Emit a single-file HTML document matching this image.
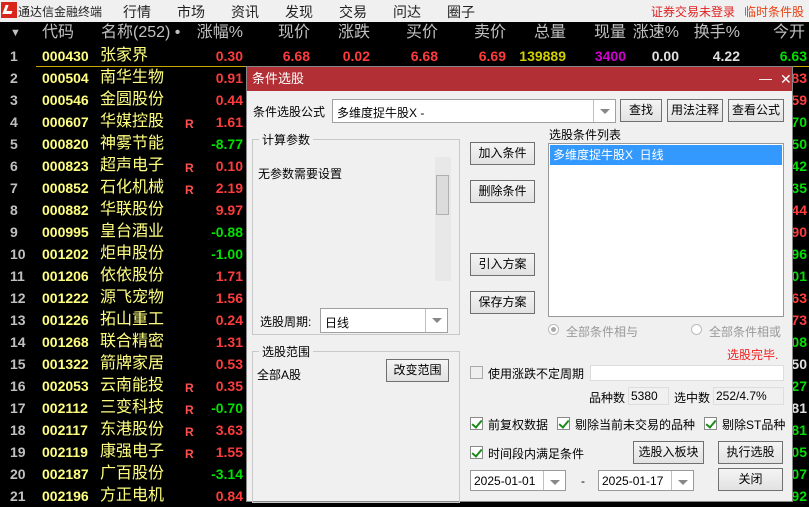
<!DOCTYPE html>
<html><head><meta charset="utf-8"><style>
*{margin:0;padding:0;box-sizing:border-box}
body{width:809px;height:507px;overflow:hidden;background:#000;position:relative;font-family:"Liberation Sans","Noto Sans CJK SC",sans-serif;}
.a{position:absolute;white-space:nowrap}
#menu{position:absolute;left:0;top:0;width:809px;height:22px;background:#f0f0f0;font-size:14px;color:#222}
#menu .a{top:2px}
.hd{position:absolute;top:22px;height:22px;line-height:22px;font-size:16px;color:#c0c0c0}
.r{position:absolute;left:0;width:809px;height:22px;line-height:22px;font-weight:bold}
.r .n{position:absolute;left:10px;color:#c0c0c0;font-size:14px;font-weight:bold}
.r .c{position:absolute;left:42px;color:#ffff80;font-size:14px}
.r .m{position:absolute;left:100px;color:#ffff80;font-size:16px;font-weight:normal}
.r .R{position:absolute;left:185px;color:#ff5050;font-size:12px;top:2px}
.r .v{position:absolute;right:566px;font-size:14px}
.r .o{position:absolute;right:2px;font-size:14px}
.red{color:#ff3c3c}.grn{color:#00e000}.wht{color:#e0e0e0}
#dlg{position:absolute;left:246px;top:66px;width:547px;height:436px;background:#f0f0f0;border:1px solid #888;font-size:12px;color:#000}
#tb{position:absolute;left:0;top:0;width:545px;height:24px;background:#b22f35;color:#fff;font-size:13px;line-height:24px;padding-left:5px}
.btn{position:absolute;border:1px solid #707070;background:linear-gradient(#f4f4f4,#e2e2e2);text-align:center;font-size:12px;height:23px;line-height:21px}
.box{position:absolute;background:#fff;border:1px solid #a0a0a0}
.grp{position:absolute;border:1px solid #c8c8c8}
.gl{position:absolute;background:#f0f0f0;padding:0 3px;font-size:12px;top:-9px;left:6px}
.cb{position:absolute;width:13px;height:13px;border:1px solid #8a8a8a;background:#fff}
.cb.k::after{content:"";position:absolute;left:3px;top:0px;width:4px;height:8px;border:solid #1a8a1a;border-width:0 2px 2px 0;transform:rotate(40deg)}
.t{position:absolute;font-size:12px;white-space:nowrap}
.dd{position:absolute;top:0;right:0;width:22px;height:100%;border-left:1px solid #c0c0c0}
.dd::after{content:"";position:absolute;left:6px;top:9px;border:5px solid transparent;border-top:5px solid #888;border-bottom:0}
</style></head><body>
<div id="menu">
<div class="a" style="left:1px;top:2px;width:16px;height:16px;background:#d9261c"></div>
<div class="a" style="left:4px;top:5px;width:9px;height:9px;border-left:3px solid #fff;border-bottom:3px solid #fff;transform:skewX(-20deg)"></div>
<div class="a" style="left:18px;top:3px;font-size:12px">通达信金融终端</div>
<div class="a" style="left:123px">行情</div><div class="a" style="left:177px">市场</div><div class="a" style="left:231px">资讯</div><div class="a" style="left:285px">发现</div><div class="a" style="left:339px">交易</div><div class="a" style="left:393px">问达</div><div class="a" style="left:447px">圈子</div>
<div class="a" style="left:651px;top:3px;font-size:12px;color:#e02020">证券交易未登录</div><div class="a" style="left:744px;top:3px;font-size:12px;color:#e84010">临时条件股</div>
</div>
<div class="hd" style="left:10px;font-size:11px">▼</div>
<div class="hd" style="left:42px">代码</div>
<div class="hd" style="left:101px">名称(252) •</div>
<div class="hd" style="right:566px">涨幅%</div>
<div class="hd" style="right:499px">现价</div>
<div class="hd" style="right:439px">涨跌</div>
<div class="hd" style="right:371px">买价</div>
<div class="hd" style="right:303px">卖价</div>
<div class="hd" style="right:243px">总量</div>
<div class="hd" style="right:183px">现量</div>
<div class="hd" style="right:130px">涨速%</div>
<div class="hd" style="right:69px">换手%</div>
<div class="hd" style="right:4px">今开</div>
<div class="r" style="top:45px"><span class="n">1</span><span class="c">000430</span><span class="m">张家界</span><span class="v red">0.30</span>
<span class="a red" style="right:499px;font-size:14px">6.68</span><span class="a red" style="right:439px;font-size:14px">0.02</span><span class="a red" style="right:371px;font-size:14px">6.68</span><span class="a red" style="right:303px;font-size:14px">6.69</span><span class="a" style="right:243px;font-size:14px;color:#d0d000">139889</span><span class="a" style="right:183px;font-size:14px;color:#d000d0">3400</span><span class="a wht" style="right:130px;font-size:14px">0.00</span><span class="a wht" style="right:69px;font-size:14px">4.22</span><span class="o grn">6.63</span></div>
<div class="a" style="left:36px;top:66px;width:773px;height:1px;background:#c8a800"></div>
<div class="r" style="top:67px"><span class="n">2</span><span class="c">000504</span><span class="m">南华生物</span><span class="v red">0.91</span><span class="o red">83</span></div>
<div class="r" style="top:89px"><span class="n">3</span><span class="c">000546</span><span class="m">金圆股份</span><span class="v red">0.44</span><span class="o red">59</span></div>
<div class="r" style="top:111px"><span class="n">4</span><span class="c">000607</span><span class="m">华媒控股</span><span class="R">R</span><span class="v red">1.61</span><span class="o grn">70</span></div>
<div class="r" style="top:133px"><span class="n">5</span><span class="c">000820</span><span class="m">神雾节能</span><span class="v grn">-8.77</span><span class="o grn">50</span></div>
<div class="r" style="top:155px"><span class="n">6</span><span class="c">000823</span><span class="m">超声电子</span><span class="R">R</span><span class="v red">0.10</span><span class="o grn">42</span></div>
<div class="r" style="top:177px"><span class="n">7</span><span class="c">000852</span><span class="m">石化机械</span><span class="R">R</span><span class="v red">2.19</span><span class="o grn">35</span></div>
<div class="r" style="top:199px"><span class="n">8</span><span class="c">000882</span><span class="m">华联股份</span><span class="v red">9.97</span><span class="o red">44</span></div>
<div class="r" style="top:221px"><span class="n">9</span><span class="c">000995</span><span class="m">皇台酒业</span><span class="v grn">-0.88</span><span class="o red">90</span></div>
<div class="r" style="top:243px"><span class="n">10</span><span class="c">001202</span><span class="m">炬申股份</span><span class="v grn">-1.00</span><span class="o grn">96</span></div>
<div class="r" style="top:265px"><span class="n">11</span><span class="c">001206</span><span class="m">依依股份</span><span class="v red">1.71</span><span class="o grn">01</span></div>
<div class="r" style="top:287px"><span class="n">12</span><span class="c">001222</span><span class="m">源飞宠物</span><span class="v red">1.56</span><span class="o red">63</span></div>
<div class="r" style="top:309px"><span class="n">13</span><span class="c">001226</span><span class="m">拓山重工</span><span class="v red">0.24</span><span class="o red">73</span></div>
<div class="r" style="top:331px"><span class="n">14</span><span class="c">001268</span><span class="m">联合精密</span><span class="v red">1.31</span><span class="o grn">08</span></div>
<div class="r" style="top:353px"><span class="n">15</span><span class="c">001322</span><span class="m">箭牌家居</span><span class="v red">0.53</span><span class="o wht">50</span></div>
<div class="r" style="top:375px"><span class="n">16</span><span class="c">002053</span><span class="m">云南能投</span><span class="R">R</span><span class="v red">0.35</span><span class="o grn">27</span></div>
<div class="r" style="top:397px"><span class="n">17</span><span class="c">002112</span><span class="m">三变科技</span><span class="R">R</span><span class="v grn">-0.70</span><span class="o wht">81</span></div>
<div class="r" style="top:419px"><span class="n">18</span><span class="c">002117</span><span class="m">东港股份</span><span class="R">R</span><span class="v red">3.63</span><span class="o grn">81</span></div>
<div class="r" style="top:441px"><span class="n">19</span><span class="c">002119</span><span class="m">康强电子</span><span class="R">R</span><span class="v red">1.55</span><span class="o grn">05</span></div>
<div class="r" style="top:463px"><span class="n">20</span><span class="c">002187</span><span class="m">广百股份</span><span class="v grn">-3.14</span><span class="o grn">07</span></div>
<div class="r" style="top:485px"><span class="n">21</span><span class="c">002196</span><span class="m">方正电机</span><span class="v red">0.84</span><span class="o grn">92</span></div>

<div id="dlg">
<div id="tb">条件选股<span class="a" style="left:512px;top:0">—</span><span class="a" style="left:533px;top:0;font-size:14px">✕</span></div>
<div class="t" style="left:6px;top:36px">条件选股公式</div>
<div class="box" style="left:85px;top:32px;width:284px;height:24px"><span class="t" style="left:4px;top:4px">多维度捉牛股X -</span><div class="dd"></div></div>
<div class="btn" style="left:373px;top:32px;width:42px">查找</div>
<div class="btn" style="left:420px;top:32px;width:56px">用法注释</div>
<div class="btn" style="left:481px;top:32px;width:56px">查看公式</div>
<div class="grp" style="left:5px;top:72px;width:208px;height:196px"><span class="gl">计算参数</span>
<span class="t" style="left:5px;top:25px">无参数需要设置</span>
<div class="a" style="left:182px;top:17px;width:16px;height:124px;background:#e8e8e8"><div class="a" style="left:1px;top:18px;width:13px;height:40px;background:#dcdcdc;border:1px solid #b0b0b0"></div></div>
<span class="t" style="left:7px;top:173px">选股周期:</span>
<div class="box" style="left:67px;top:168px;width:128px;height:25px"><span class="t" style="left:4px;top:5px">日线</span><div class="dd"></div></div>
</div>
<div class="grp" style="left:5px;top:284px;width:208px;height:152px"><span class="gl">选股范围</span>
<span class="t" style="left:4px;top:14px">全部A股</span>
<div class="btn" style="left:133px;top:7px;width:63px">改变范围</div></div>
<div class="btn" style="left:223px;top:75px;width:65px">加入条件</div>
<div class="btn" style="left:223px;top:113px;width:65px">删除条件</div>
<div class="btn" style="left:223px;top:186px;width:65px">引入方案</div>
<div class="btn" style="left:223px;top:224px;width:65px">保存方案</div>
<span class="t" style="left:302px;top:59px">选股条件列表</span>
<div class="box" style="left:301px;top:76px;width:236px;height:174px;border-color:#999"><div class="a" style="left:1px;top:1px;width:232px;height:20px;background:#3399ff;color:#fff;font-size:12px;line-height:20px;padding-left:3px">多维度捉牛股X&nbsp; 日线</div></div>
<div class="a" style="left:301px;top:257px;width:11px;height:11px;border-radius:50%;border:1px solid #bbb;background:#fff"><div class="a" style="left:2px;top:2px;width:5px;height:5px;border-radius:50%;background:#aaa"></div></div>
<span class="t" style="left:319px;top:256px;color:#999">全部条件相与</span>
<div class="a" style="left:444px;top:257px;width:11px;height:11px;border-radius:50%;border:1px solid #bbb;background:#fff"></div>
<span class="t" style="left:462px;top:256px;color:#999">全部条件相或</span>
<span class="t" style="left:480px;top:279px;color:#f02020">选股完毕.</span>
<div class="cb" style="left:223px;top:299px;border-color:#aaa;background:#eee"></div>
<span class="t" style="left:241px;top:298px">使用涨跌不定周期</span>
<div class="box" style="left:343px;top:298px;width:194px;height:16px;border-color:#ddd"></div>
<span class="t" style="left:342px;top:322px">品种数</span>
<div class="a" style="left:381px;top:320px;width:41px;height:18px;border:1px solid #ddd;font-size:12px;line-height:16px;padding-left:2px">5380</div>
<span class="t" style="left:427px;top:322px">选中数</span>
<div class="a" style="left:466px;top:320px;width:71px;height:18px;border:1px solid #ddd;font-size:12px;line-height:16px;padding-left:2px">252/4.7%</div>
<div class="cb k" style="left:223px;top:350px"></div><span class="t" style="left:241px;top:349px">前复权数据</span>
<div class="cb k" style="left:310px;top:350px"></div><span class="t" style="left:328px;top:349px">剔除当前未交易的品种</span>
<div class="cb k" style="left:457px;top:350px"></div><span class="t" style="left:475px;top:349px">剔除ST品种</span>
<div class="cb k" style="left:223px;top:379px"></div><span class="t" style="left:241px;top:378px">时间段内满足条件</span>
<div class="btn" style="left:386px;top:374px;width:71px">选股入板块</div>
<div class="btn" style="left:471px;top:374px;width:65px">执行选股</div>
<div class="box" style="left:223px;top:403px;width:96px;height:21px;border-color:#999"><span class="t" style="left:3px;top:3px">2025-01-01</span><div class="dd"></div></div>
<span class="t" style="left:334px;top:407px">-</span>
<div class="box" style="left:351px;top:403px;width:96px;height:21px;border-color:#999"><span class="t" style="left:3px;top:3px">2025-01-17</span><div class="dd"></div></div>
<div class="btn" style="left:471px;top:401px;width:65px">关闭</div>
</div>
</body></html>
